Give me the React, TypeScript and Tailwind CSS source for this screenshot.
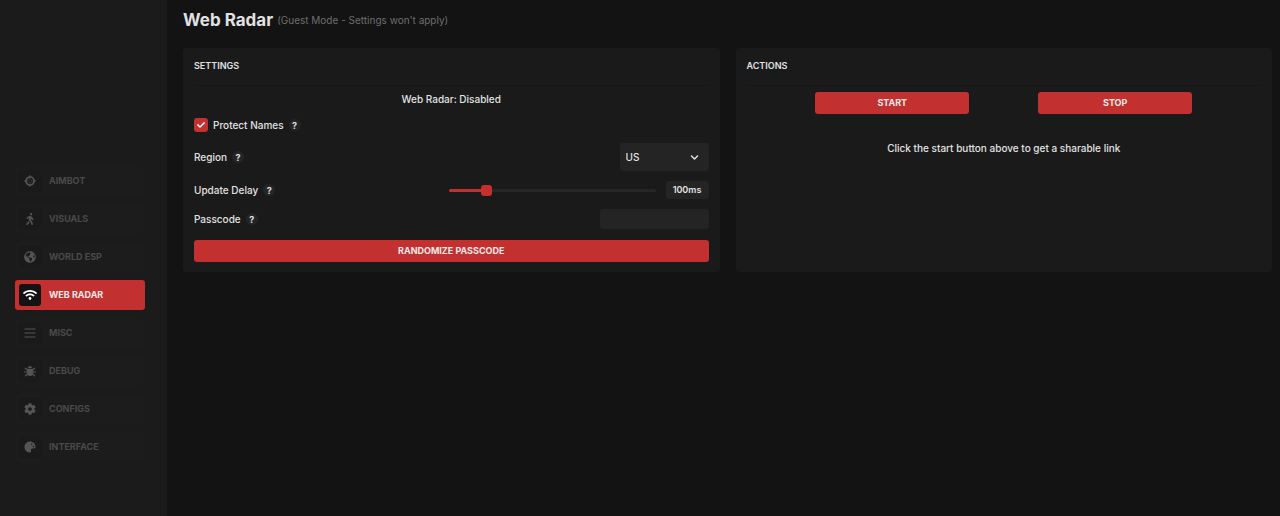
import { useState } from 'react'
import type { ReactNode } from 'react'
import clsx from 'clsx'
import type { IconType } from 'react-icons'
import { FaCheck, FaChevronDown, FaCog, FaGlobeAmericas, FaWalking, FaWifi } from 'react-icons/fa'

interface IconProps {
  className?: string
}

function CrosshairIcon({ className }: IconProps) {
  return (
    <svg viewBox="0 0 24 24" fill="none" stroke="currentColor" className={className}>
      <circle cx="12" cy="12" r="8" strokeWidth="3.4" />
      <path d="M12 1v4M12 19v4M1 12h4M19 12h4" strokeWidth="3" />
      <path d="M12 7v3M12 14v3M7 12h3M14 12h3" strokeWidth="1.6" />
    </svg>
  )
}

function MenuIcon({ className }: IconProps) {
  return (
    <svg viewBox="0 0 24 24" fill="none" stroke="currentColor" className={className}>
      <path d="M2 4h20M2 12h20M2 20h20" strokeWidth="2.4" strokeLinecap="round" />
    </svg>
  )
}

function BugIcon({ className }: IconProps) {
  return (
    <svg viewBox="0 0 24 24" fill="currentColor" className={className}>
      <path d="M8 6a4 4 0 0 1 8 0z" />
      <path d="M6 7.5h12V16a6 6 0 0 1-12 0z" />
      <path
        d="M6 9.5L2.500 6.500M18 9.5l3.500-3M6 14H1M18 14h5M6.500 18L3 21.500M17.500 18l3.500 3.500"
        fill="none"
        stroke="currentColor"
        strokeWidth="2.4"
        strokeLinecap="round"
      />
    </svg>
  )
}

function PaletteIcon({ className }: IconProps) {
  return (
    <svg viewBox="0 0 24 24" fill="currentColor" className={className}>
      <path
        fillRule="evenodd"
        d="M12 1C5.900 1 1 5.900 1 12s4.900 11 11 11c1.700 0 2.600-1.300 2.200-2.800-.5-2-.9-5.200 2.300-5.200H20c1.900 0 3-1.300 3-3.200C23 5.700 18 1 12 1zm3.500 4a1.500 1.500 0 1 1 0 3 1.500 1.500 0 0 1 0-3zm3.300 4.500a1.500 1.500 0 1 1 0 3 1.500 1.500 0 0 1 0-3z"
      />
    </svg>
  )
}

interface NavItem {
  id: string
  label: string
  icon: IconType | typeof CrosshairIcon
}

const navItems: NavItem[] = [
  { id: 'aimbot', label: 'AIMBOT', icon: CrosshairIcon },
  { id: 'visuals', label: 'VISUALS', icon: FaWalking },
  { id: 'world', label: 'WORLD ESP', icon: FaGlobeAmericas },
  { id: 'radar', label: 'WEB RADAR', icon: FaWifi },
  { id: 'misc', label: 'MISC', icon: MenuIcon },
  { id: 'debug', label: 'DEBUG', icon: BugIcon },
  { id: 'configs', label: 'CONFIGS', icon: FaCog },
  { id: 'interface', label: 'INTERFACE', icon: PaletteIcon },
]

function Sidebar() {
  const [active, setActive] = useState('radar')

  return (
    <nav className="flex w-[167px] shrink-0 flex-col gap-2 bg-[#1b1b1b] pt-[166px] pr-[22px] pb-4 pl-[15px]">
      {navItems.map(({ id, label, icon: Icon }) => (
        <button
          key={id}
          type="button"
          onClick={() => setActive(id)}
          className={clsx(
            'flex h-[30px] w-full items-center gap-2 rounded-[3px] px-1 text-[9px] font-bold',
            active === id ? 'bg-[#c23030] text-[#f0e8e8]' : 'bg-[#1c1c1c] text-[#4a4a4a]'
          )}
        >
          <span
            className={clsx(
              'flex size-[22px] items-center justify-center rounded-[3px]',
              active === id ? 'bg-[#131313] text-white' : 'bg-[#1a1a1a] text-[#555555]'
            )}
          >
            <Icon className={active === id ? 'size-[14px]' : 'size-3'} />
          </span>
          {label}
        </button>
      ))}
    </nav>
  )
}

function Card({ title, children }: { title: string; children: ReactNode }) {
  return (
    <section className="min-w-0 flex-1 rounded-[3px] bg-[#1a1a1a] px-[11px] pb-[10px]">
      <h2 className="border-b border-[#161616] pt-[10px] pb-[11px] text-[9px] leading-4 font-semibold">{title}</h2>
      {children}
    </section>
  )
}

function Help({ text }: { text: string }) {
  return (
    <button
      type="button"
      aria-label={text}
      className="flex size-3 items-center justify-center rounded-full bg-[#252525] text-[9px] leading-none font-bold"
    >
      ?
    </button>
  )
}

function RedButton({ children, className }: { children: ReactNode; className?: string }) {
  return (
    <button
      type="button"
      className={clsx('h-[22px] rounded-[3px] bg-[#c23030] text-[9px] font-bold text-[#f0e8e8]', className)}
    >
      {children}
    </button>
  )
}

function Settings() {
  const [protectNames, setProtectNames] = useState(true)
  const [region, setRegion] = useState('US')
  const [delay, setDelay] = useState(100)
  const [passcode, setPasscode] = useState('')
  const fill = (delay / 600) * 100

  return (
    <Card title="SETTINGS">
      <p className="mt-[5px] text-center leading-4">Web Radar: Disabled</p>

      <div className="mt-[10px] flex h-4 items-center gap-[5px]">
        <span className="grid place-items-center">
          <input
            id="protect-names"
            type="checkbox"
            checked={protectNames}
            onChange={(e) => setProtectNames(e.target.checked)}
            className="col-start-1 row-start-1 size-[14px] appearance-none rounded-[3px] bg-[#262626] checked:bg-[#c23030]"
          />
          {protectNames && <FaCheck className="pointer-events-none col-start-1 row-start-1 size-2 text-white" />}
        </span>
        <label htmlFor="protect-names">Protect Names</label>
        <Help text="About protect names" />
      </div>

      <div className="mt-[10px] flex items-center gap-[5px]">
        <label htmlFor="region">Region</label>
        <Help text="About region" />
        <span className="ml-auto grid w-[89px] items-center">
          <select
            id="region"
            value={region}
            onChange={(e) => setRegion(e.target.value)}
            className="col-start-1 row-start-1 h-7 w-full appearance-none rounded-[3px] bg-[#242424] px-[6px]"
          >
            <option>US</option>
            <option>EU</option>
            <option>ASIA</option>
          </select>
          <FaChevronDown className="pointer-events-none col-start-1 row-start-1 mr-[10px] size-[9px] justify-self-end" />
        </span>
      </div>

      <div className="mt-[10px] flex items-center gap-[5px]">
        <label htmlFor="delay">Update Delay</label>
        <Help text="About update delay" />
        <input
          id="delay"
          type="range"
          min={0}
          max={600}
          value={delay}
          onChange={(e) => setDelay(Number(e.target.value))}
          style={{ backgroundImage: `linear-gradient(to right, #c23030 ${fill}%, #262626 ${fill}%)` }}
          className="ml-auto h-[3px] w-[207px] appearance-none rounded-full [&::-webkit-slider-thumb]:size-[11px] [&::-webkit-slider-thumb]:appearance-none [&::-webkit-slider-thumb]:rounded-[3px] [&::-webkit-slider-thumb]:bg-[#c23030]"
        />
        <output
          htmlFor="delay"
          className="ml-[5px] flex h-[18px] w-[43px] items-center justify-center rounded-[3px] bg-[#242424] text-[9px] font-semibold"
        >
          {delay}ms
        </output>
      </div>

      <div className="mt-[10px] flex items-center gap-[5px]">
        <label htmlFor="passcode">Passcode</label>
        <Help text="About passcode" />
        <input
          id="passcode"
          type="text"
          value={passcode}
          onChange={(e) => setPasscode(e.target.value)}
          className="ml-auto h-5 w-[109px] rounded-[3px] bg-[#242424] px-[6px]"
        />
      </div>

      <RedButton className="mt-[11px] w-full">RANDOMIZE PASSCODE</RedButton>
    </Card>
  )
}

function Actions() {
  return (
    <Card title="ACTIONS">
      <div className="mt-[6px] flex justify-evenly">
        <RedButton className="w-[30%]">START</RedButton>
        <RedButton className="w-[30%]">STOP</RedButton>
      </div>
      <p className="mt-[26px] text-center leading-4">Click the start button above to get a sharable link</p>
    </Card>
  )
}

export default function App() {
  return (
    <div className="flex min-h-screen bg-[#131313] font-['Inter',sans-serif] text-[10px] font-medium text-[#e2e2e2]">
      <Sidebar />
      <main className="min-w-0 flex-1 pr-2 pl-4">
        <header className="flex items-center gap-1 pt-2 pb-4">
          <h1 className="text-[17px] leading-6 font-bold">Web Radar</h1>
          <span className="text-[10px] font-normal text-[#6e6e6e]">(Guest Mode - Settings won't apply)</span>
        </header>
        <div className="flex gap-4">
          <Settings />
          <Actions />
        </div>
      </main>
    </div>
  )
}
